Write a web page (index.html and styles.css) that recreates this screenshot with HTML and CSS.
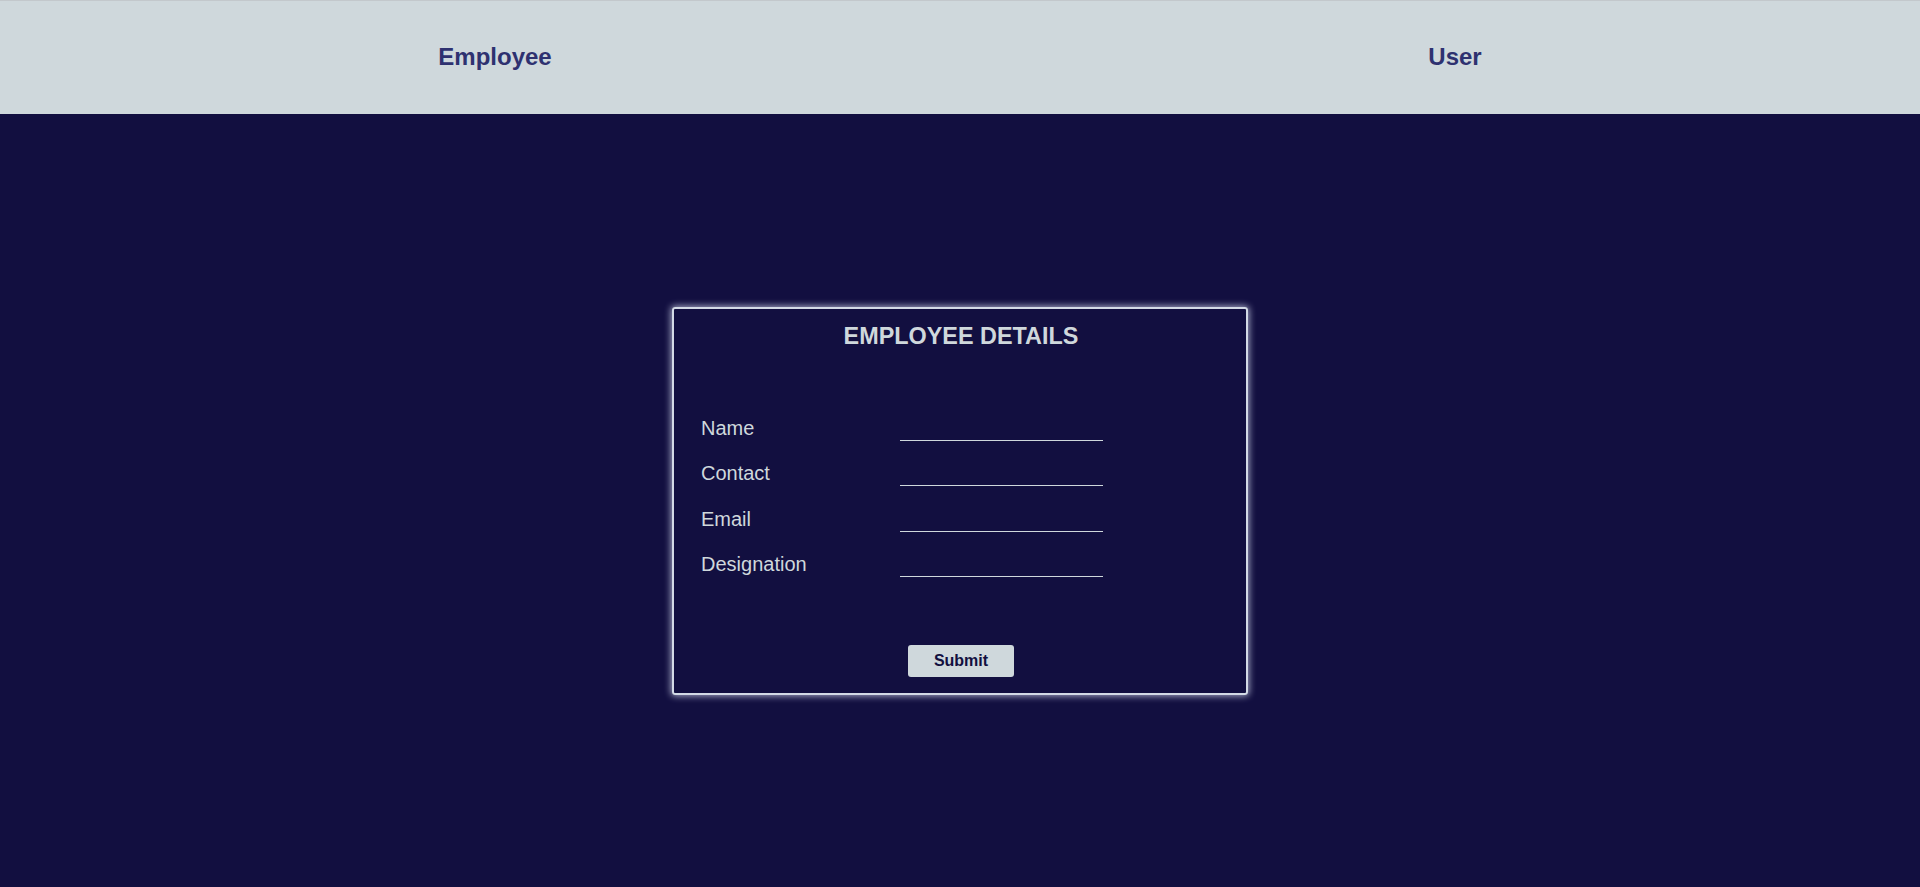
FILE: index.html
```html
<!DOCTYPE html>
<html lang="en">
<head>
<meta charset="utf-8">
<title>Employee Details</title>
<link rel="stylesheet" href="styles.css">
</head>
<body>
<header class="topbar">
  <nav class="nav">
    <a class="nav-link" href="#">Employee</a>
    <a class="nav-link" href="#">User</a>
  </nav>
</header>
<main class="main">
  <form class="card">
    <h2 class="card-title">EMPLOYEE DETAILS</h2>
    <div class="fields">
      <div class="field"><label class="field-label">Name</label><input class="field-input" type="text"></div>
      <div class="field"><label class="field-label">Contact</label><input class="field-input" type="text"></div>
      <div class="field"><label class="field-label">Email</label><input class="field-input" type="text"></div>
      <div class="field"><label class="field-label">Designation</label><input class="field-input" type="text"></div>
    </div>
    <div class="actions">
      <button class="submit" type="button">Submit</button>
    </div>
  </form>
</main>
</body>
</html>
```
FILE: styles.css
```css
* { box-sizing: border-box; }
html, body { margin: 0; padding: 0; }
body {
  background: #120f40;
  font-family: "Liberation Sans", Arial, sans-serif;
  min-height: 887px;
  display: flex;
  flex-direction: column;
}
.topbar {
  height: 114px;
  background: #cfd8dc;
  border-top: 1px solid #c3c8cc;
}
.nav {
  height: 100%;
  display: flex;
  justify-content: space-around;
  align-items: center;
  padding-bottom: 2px;
}
.nav-link {
  color: #2e3170;
  font-size: 24px;
  font-weight: bold;
  text-decoration: none;
}
.main {
  flex: 1;
  display: flex;
  align-items: center;
  justify-content: center;
}
.card {
  width: 576px;
  height: 388px;
  border: 2px solid #d3dae6;
  border-radius: 3px;
  box-shadow: 0 0 7px 1px rgba(220, 225, 245, 0.75);
  padding: 14px 25px 0 27px;
  display: flex;
  flex-direction: column;
}
.card-title {
  margin: 0;
  text-align: center;
  color: #cfd8dc;
  font-size: 23.4px;
  font-weight: bold;
}
.fields {
  margin-top: 67px;
  display: flex;
  flex-direction: column;
  gap: 22.6px;
}
.field {
  display: flex;
  align-items: flex-end;
}
.field-label {
  width: 199px;
  font-size: 20px;
  line-height: 23px;
  color: #cfd8dc;
}
.field-input {
  width: 203px;
  height: 23px;
  margin-bottom: -1px;
  background: transparent;
  border: none;
  border-bottom: 1px solid #cfd8dc;
  color: #cfd8dc;
  font-family: inherit;
  font-size: 16px;
  padding: 0;
  outline: none;
}
.actions {
  margin-top: 69px;
  display: flex;
  justify-content: center;
}
.submit {
  width: 106px;
  height: 32px;
  background: #cfd8dc;
  color: #120f40;
  border: none;
  border-radius: 3px;
  font-family: inherit;
  font-size: 16px;
  font-weight: bold;
  padding: 0;
}
```
